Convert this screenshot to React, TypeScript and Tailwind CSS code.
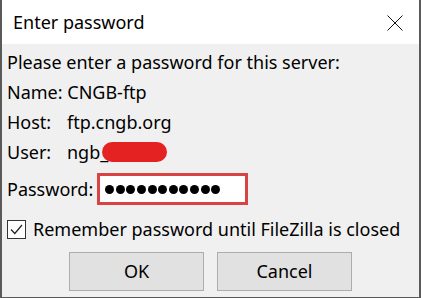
import React from "react";

const font = { fontFamily: '"Noto Sans", "Open Sans", sans-serif' };

const Row = ({ label, children }: { label: string; children: React.ReactNode }) => (
  <div className="grid h-[30px] grid-cols-[60px_auto] items-center">
    <span>{label}</span>
    <div className="flex items-center">{children}</div>
  </div>
);

export default function App() {
  return (
    <div
      className="flex h-[298px] w-[421px] flex-col border-x-2 border-b border-x-[#5a5a5a] border-b-[#5a5a5a] bg-[#f0f0f0] text-[18px] text-black"
      style={font}
    >
      {/* Title bar */}
      <div className="flex h-[44px] shrink-0 items-center justify-between bg-white pl-[11px] pr-[16px]">
        <span className="text-[18px]">Enter password</span>
        <svg width="16" height="16" viewBox="0 0 16 16" className="mt-[1px]">
          <path d="M0.5 0.5 L15.5 15.5 M15.5 0.5 L0.5 15.5" stroke="#111" strokeWidth="1" fill="none" />
        </svg>
      </div>

      {/* Body */}
      <div className="flex flex-col px-[5px] pt-[3px]">
        <div className="flex h-[30px] items-center">Please enter a password for this server:</div>
        <div className="flex h-[30px] items-center">Name: CNGB-ftp</div>
        <Row label="Host:">ftp.cngb.org</Row>
        <Row label="User:">
          <span>ngb_</span>
          <span className="-ml-[6px] h-[20px] w-[65px] rounded-full bg-[#e52222]" />
        </Row>

        <div className="mt-[6px] flex items-center">
          <span>Password:</span>
          <div className="ml-[4px] flex h-[32px] w-[151px] items-center gap-[1.6px] border-[3px] border-[#d84343] bg-white pl-[5px]">
            {Array.from({ length: 11 }).map((_, i) => (
              <span key={i} className="h-[9px] w-[9px] rounded-full bg-black" />
            ))}
          </div>
        </div>

        <div className="mt-[14px] flex h-[20px] items-center gap-[7px]">
          <span className="flex h-[19px] w-[19px] items-center justify-center border border-[#333] bg-white">
            <svg width="13" height="11" viewBox="0 0 13 11">
              <path d="M1 5.5 L4.8 9.5 L12 1" stroke="#222" strokeWidth="1.2" fill="none" />
            </svg>
          </span>
          <span>Remember password until FileZilla is closed</span>
        </div>

        <div className="mt-[13px] flex justify-center gap-[13px]">
          <button className="h-[39px] w-[135px] border border-[#adadad] bg-[#e1e1e1]">OK</button>
          <button className="h-[39px] w-[135px] border border-[#adadad] bg-[#e1e1e1]">Cancel</button>
        </div>
      </div>
    </div>
  );
}
